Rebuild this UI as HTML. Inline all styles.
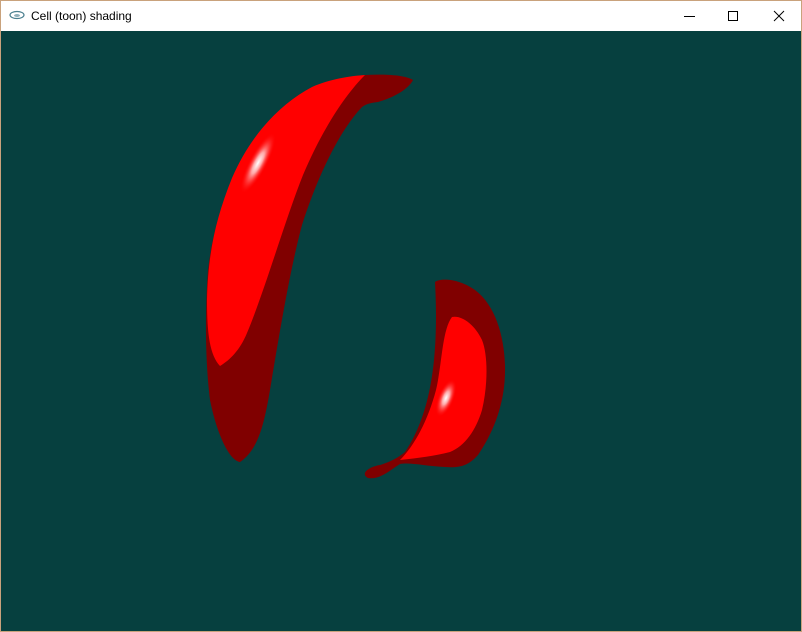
<!DOCTYPE html>
<html><head><meta charset="utf-8"><style>
html,body{margin:0;padding:0;width:802px;height:632px;overflow:hidden;background:#06403f}
.win{position:absolute;left:0;top:0;width:800px;height:630px;border:1px solid #c9a27c;background:#06403f}
.tb{position:absolute;left:0;top:0;width:800px;height:30px;background:#fff;font-family:"Liberation Sans",sans-serif;font-size:12px;color:#000}
.tb .t{position:absolute;left:30px;top:8px}
</style></head><body>
<div class="win">
<div class="tb">
<svg style="position:absolute;left:8px;top:9px" width="16" height="10"><ellipse cx="8" cy="5" rx="7" ry="3.5" fill="none" stroke="#4a7f8f" stroke-width="1.2"/><ellipse cx="8" cy="5.5" rx="3" ry="1.5" fill="#8fb0bb"/></svg>
<span class="t">Cell (toon) shading</span>
<svg style="position:absolute;left:680px;top:8px" width="110" height="14">
<line x1="3" y1="7.5" x2="14" y2="7.5" stroke="#000" stroke-width="1"/>
<rect x="47.5" y="2.5" width="9" height="9" fill="none" stroke="#000" stroke-width="1"/>
<line x1="93" y1="2" x2="103" y2="12" stroke="#000" stroke-width="1"/>
<line x1="103" y1="2" x2="93" y2="12" stroke="#000" stroke-width="1"/>
</svg>
</div>
<svg style="position:absolute;left:-1px;top:-1px" width="802" height="632">
<defs>
<radialGradient id="h1" cx="0" cy="0" r="1" gradientUnits="userSpaceOnUse" gradientTransform="translate(258,163) rotate(-62) scale(34,9)">
<stop offset="0" stop-color="#fff"/><stop offset="0.35" stop-color="#ffa8a8"/><stop offset="1" stop-color="#ff0000" stop-opacity="0"/></radialGradient>
<radialGradient id="h2" cx="0" cy="0" r="1" gradientUnits="userSpaceOnUse" gradientTransform="translate(446,398) rotate(-68) scale(20,8)">
<stop offset="0" stop-color="#fff"/><stop offset="0.35" stop-color="#ffa8a8"/><stop offset="1" stop-color="#ff0000" stop-opacity="0"/></radialGradient>
</defs>
<path fill="#800000" d="M365,75 C385,74 405,75 413,80 C408,90 392,98 378,102 C370,103 366,104 362,107 C340,130 318,175 302,225 C290,270 280,330 270,390 C264,425 258,450 240,462 C228,460 216,430 210,400 C205,360 205,310 208,270 C214,220 230,175 258,135 C285,100 325,78 365,75 Z"/>
<path fill="#ff0000" d="M365,75 C345,95 322,130 303,175 C285,220 265,290 247,333 C240,350 230,360 220,366 C210,355 207,335 207,300 C208,255 215,220 232,178 C252,132 282,103 312,87 C330,79 350,76 365,75 Z"/>
<path fill="url(#h1)" d="M225,115 L295,115 L295,210 L220,210 Z"/>
<path fill="#800000" d="M435,282 C440,278 458,278 475,290 C495,305 504,335 505,365 C506,400 495,430 478,455 C468,466 460,468 445,467 C425,466 410,462 400,464 C390,470 380,480 368,478 C360,474 368,467 380,465 C390,462 398,458 405,452 C420,430 430,400 434,360 C437,330 436,300 435,282 Z"/>
<path fill="#ff0000" d="M452,317 C462,315 475,325 482,340 C488,355 488,385 482,410 C476,430 465,446 450,452 C435,456 418,458 400,460 C415,445 428,420 436,390 C442,365 442,330 452,317 Z"/>
<path fill="url(#h2)" d="M425,365 L470,365 L470,430 L425,430 Z"/>
</svg>
</div>
</body></html>
